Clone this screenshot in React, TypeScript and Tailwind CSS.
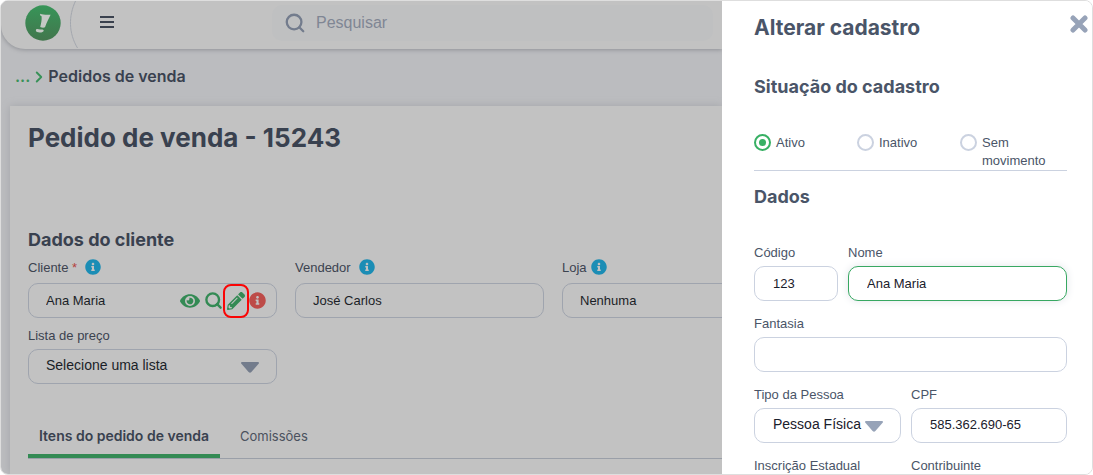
import type { ReactNode } from "react";
import { FaEye, FaInfoCircle, FaPencilAlt } from "react-icons/fa";
import { FiChevronRight, FiSearch } from "react-icons/fi";

const dimBox =
  "flex h-[35px] w-full items-center rounded-[10px] border border-[#9fa4ae] pl-[17px] text-[#1a1e27]";
const box =
  "block h-[35px] w-full rounded-[10px] border border-[#cbd2e0] bg-white pl-[18px] text-[#1a202c] outline-none";

function Caret({ className }: { className: string }) {
  return (
    <svg viewBox="0 0 18 11" className={className} aria-hidden="true">
      <path d="M1 0h16c1 0 1.300 1 .6 1.800L10.400 10c-.9 1-1.900 1-2.800 0L.4 1.800C-.3 1 0 0 1 0Z" fill="currentColor" />
    </svg>
  );
}

function Logo() {
  return (
    <svg viewBox="0 0 36 36" className="size-9" role="img" aria-label="Início">
      <defs>
        <linearGradient id="logo-fill" x1="0" y1="0" x2="0" y2="1">
          <stop offset="0" stopColor="#379558" />
          <stop offset="1" stopColor="#42764d" />
        </linearGradient>
      </defs>
      <circle cx="18" cy="18" r="17.700" fill="url(#logo-fill)" />
      <path d="M15.200 8.800C18 9.900 22 10 25.600 9.700C24 13 21.600 17.500 20 22.300C18.500 22.900 16.900 22.700 15.200 22C16.200 18.500 16.900 14.500 16.600 11.500C16.300 10.800 15.500 10.600 15 10.300Z" fill="#c4c9c5" />
      <path d="M11.300 24.300C12.500 23.500 13.700 24.500 15.500 24.400C17.500 24.300 18.900 24.600 18.700 25.700C18.400 27 16.700 27.600 14.700 27.500C12.600 27.400 11.100 26.700 10.900 25.700C10.800 25.100 10.900 24.600 11.300 24.300Z" fill="#c4c9c5" />
    </svg>
  );
}

function PageField({ id, label, info, tight, required, children }: {
  id: string; label: string; info?: boolean; tight?: boolean; required?: boolean; children: ReactNode;
}) {
  return (
    <div className="w-[249px] shrink-0">
      <div className={info ? "mb-1 flex h-5" : "mb-1 flex h-[18px]"}>
        <label htmlFor={id} className="leading-[18px] text-[#3c4350]">
          {label}
          {required && <span className="text-[#b5413c]"> *</span>}
        </label>
        {info && (
          <button type="button" aria-label={`Ajuda: ${label}`} className={tight ? "ml-1 h-4" : "ml-2 h-4"}>
            <FaInfoCircle className="size-4 text-[#1b8db5]" />
          </button>
        )}
      </div>
      {children}
    </div>
  );
}

function Field({ id, label, className, children }: { id: string; label: string; className: string; children: ReactNode }) {
  return (
    <div className={className}>
      <label htmlFor={id} className="mb-1 block leading-[18px] text-[#4a5568]">{label}</label>
      {children}
    </div>
  );
}

const situations = ["Ativo", "Inativo", "Sem movimento"];

export default function App() {
  return (
    <div className="h-screen bg-white font-['Liberation_Sans',Arial,sans-serif] text-[13px]">
      <div className="flex h-full overflow-hidden rounded-lg border border-[#dedede]">
        <div className="flex min-w-0 flex-1 flex-col overflow-hidden bg-[#bbbcbf]">
          <header className="flex h-12 shrink-0 items-start rounded-bl-[24px] bg-[#c2c2c2] shadow-[0_1px_4px_#8f9196]">
            <a href="#inicio" className="ml-6 mt-1 block"><Logo /></a>
            <svg viewBox="0 0 10 48" className="ml-2 h-12 w-[10px]" aria-hidden="true">
              <path d="M6.500 0C-.5 15 -.5 32 8.500 47" fill="none" stroke="#a3a7ae" />
            </svg>
            <button type="button" aria-label="Menu" className="ml-[21px] mt-[15px]">
              <svg viewBox="0 0 14 12" className="h-3 w-[14px]">
                <path d="M0 1h14M0 6h14M0 11h14" stroke="#3a414e" strokeWidth="2" />
              </svg>
            </button>
            <label className="ml-[158px] mr-[9px] mt-1 flex h-9 min-w-0 flex-1 items-center rounded-[10px] bg-[#bfc0c1] pl-3">
              <FiSearch className="size-[22px] shrink-0 text-[#737c8d]" strokeWidth={2.500} />
              <input type="search" aria-label="Pesquisar" placeholder="Pesquisar" className="ml-[10px] min-w-0 flex-1 bg-transparent text-[16px] outline-none placeholder:text-[#7f8694]" />
            </label>
          </header>

          <nav aria-label="Trilha" className="flex h-[57px] shrink-0 items-center pb-1 pl-[14px] font-['Inter',sans-serif] text-[16px] font-semibold">
            <a href="#vendas" className="text-[#389158]">...</a>
            <FiChevronRight className="mt-[2px] size-[18px] text-[#389158]" strokeWidth={2.500} />
            <span className="text-[#39414f]">Pedidos de venda</span>
          </nav>

          <main className="ml-[9px] flex-1 bg-[#c2c2c2] pl-[18px] shadow-[0_0_8px_#a3a5a9]">
            <h1 className="pt-3 font-['Inter',sans-serif] text-[26px] font-bold leading-10 text-[#39414f]">Pedido de venda - 15243</h1>
            <h2 className="mt-[70px] font-['Inter',sans-serif] text-[18px] font-bold leading-6 text-[#39414f]">Dados do cliente</h2>
            <div className="mt-[7px] flex gap-[18px]">
              <PageField id="cliente" label="Cliente" info required>
                <div className={dimBox}>
                  <input id="cliente" defaultValue="Ana Maria" className="min-w-0 flex-1 bg-transparent outline-none" />
                  <div className="flex items-center gap-1 pr-[10px] text-[#338a54]">
                    <button type="button" aria-label="Visualizar"><FaEye className="size-5" /></button>
                    <button type="button" aria-label="Buscar cliente"><FiSearch className="size-[19px]" strokeWidth={3} /></button>
                    <button type="button" aria-label="Alterar cadastro" className="relative">
                      <FaPencilAlt className="size-[18px]" />
                      <span className="absolute -inset-x-1 -inset-y-2 rounded-lg border-2 border-[#fa0505]" />
                    </button>
                    <button type="button" aria-label="Pendências"><FaInfoCircle className="size-[17px] text-[#bd4b48]" /></button>
                  </div>
                </div>
              </PageField>
              <PageField id="vendedor" label="Vendedor" info>
                <input id="vendedor" defaultValue="José Carlos" className={dimBox} />
              </PageField>
              <PageField id="loja" label="Loja" info tight>
                <input id="loja" defaultValue="Nenhuma" className={dimBox} />
              </PageField>
            </div>
            <div className="mt-[9px]">
              <PageField id="lista" label="Lista de preço">
                <div className="relative">
                  <select id="lista" className={`${dimBox} appearance-none pb-[2px] text-[14px]`}>
                    <option>Selecione uma lista</option>
                  </select>
                  <Caret className="pointer-events-none absolute right-[18px] top-[13px] h-[11px] w-[18px] text-[#737c8c]" />
                </div>
              </PageField>
            </div>
            <div role="tablist" className="mt-8 flex h-[43px] items-stretch border-b border-[#9a9fa8] font-['Inter',sans-serif]">
              <button type="button" role="tab" aria-selected="true" className="w-48 border-b-4 border-[#338a54] text-[14px] font-semibold text-[#39414f]">Itens do pedido de venda</button>
              <button type="button" role="tab" aria-selected="false" className="px-5 text-[13px] text-[#4a515e]">Comissões</button>
            </div>
          </main>
        </div>

        <aside role="dialog" aria-labelledby="drawer-title" className="relative w-[370px] shrink-0 overflow-hidden bg-white pl-8 pr-[25px]">
          <button type="button" aria-label="Fechar" className="absolute right-1 top-[14px]">
            <svg viewBox="0 0 18 18" className="size-[18px]">
              <path d="M3 3l12 12M15 3L3 15" stroke="#97a3b8" strokeWidth="5" strokeLinecap="round" />
            </svg>
          </button>
          <h2 id="drawer-title" className="pt-[11px] font-['Inter',sans-serif] text-[21px] font-bold leading-8 text-[#4a5568]">Alterar cadastro</h2>
          <form>
            <h3 id="situacao-title" className="mt-[31px] font-['Inter',sans-serif] text-[18px] font-bold leading-6 text-[#4a5568]">Situação do cadastro</h3>
            <div role="radiogroup" aria-labelledby="situacao-title" className="mt-[35px] flex border-b border-[#cbd2e0]">
              {situations.map((name, i) => (
                <label key={name} className="flex w-[103px] items-start gap-[5px] leading-[18px] text-[#4a5568]">
                  <input
                    type="radio"
                    name="situacao"
                    defaultChecked={i === 0}
                    className="grid size-[17px] shrink-0 appearance-none place-items-center rounded-full border-2 border-[#cbd2e0] checked:border-[#38b064] checked:before:size-[7px] checked:before:rounded-full checked:before:bg-[#38b064]"
                  />
                  {name}
                </label>
              ))}
            </div>
            <h3 className="mt-[14px] font-['Inter',sans-serif] text-[18px] font-bold leading-6 text-[#4a5568]">Dados</h3>
            <div className="mt-[35px] flex flex-col gap-[14px]">
              <div className="flex gap-[10px]">
                <Field id="codigo" label="Código" className="w-[84px]">
                  <input id="codigo" defaultValue="123" className={box} />
                </Field>
                <Field id="nome" label="Nome" className="flex-1">
                  <input id="nome" defaultValue="Ana Maria" className="block h-[35px] w-full rounded-[10px] border border-[#38a862] bg-white pl-[18px] text-[#1a202c] shadow-[0_0_8px_#e2e5ea] outline-none" />
                </Field>
              </div>
              <Field id="fantasia" label="Fantasia" className="w-full">
                <input id="fantasia" className={box} />
              </Field>
              <div className="flex gap-[10px]">
                <Field id="tipo" label="Tipo da Pessoa" className="w-[147px]">
                  <div className="relative">
                    <select id="tipo" className={`${box} appearance-none pb-[2px] text-[14px]`}>
                      <option>Pessoa Física</option>
                    </select>
                    <Caret className="pointer-events-none absolute right-[18px] top-[13px] h-[11px] w-[18px] text-[#97a3b8]" />
                  </div>
                </Field>
                <Field id="cpf" label="CPF" className="flex-1">
                  <input id="cpf" defaultValue="585.362.690-65" className={`${box} pb-[2px]`} />
                </Field>
              </div>
              <div className="flex gap-[10px]">
                <Field id="inscricao" label="Inscrição Estadual" className="w-[147px]">
                  <input id="inscricao" className={box} />
                </Field>
                <Field id="contribuinte" label="Contribuinte" className="flex-1">
                  <input id="contribuinte" className={box} />
                </Field>
              </div>
            </div>
          </form>
        </aside>
      </div>
    </div>
  );
}
